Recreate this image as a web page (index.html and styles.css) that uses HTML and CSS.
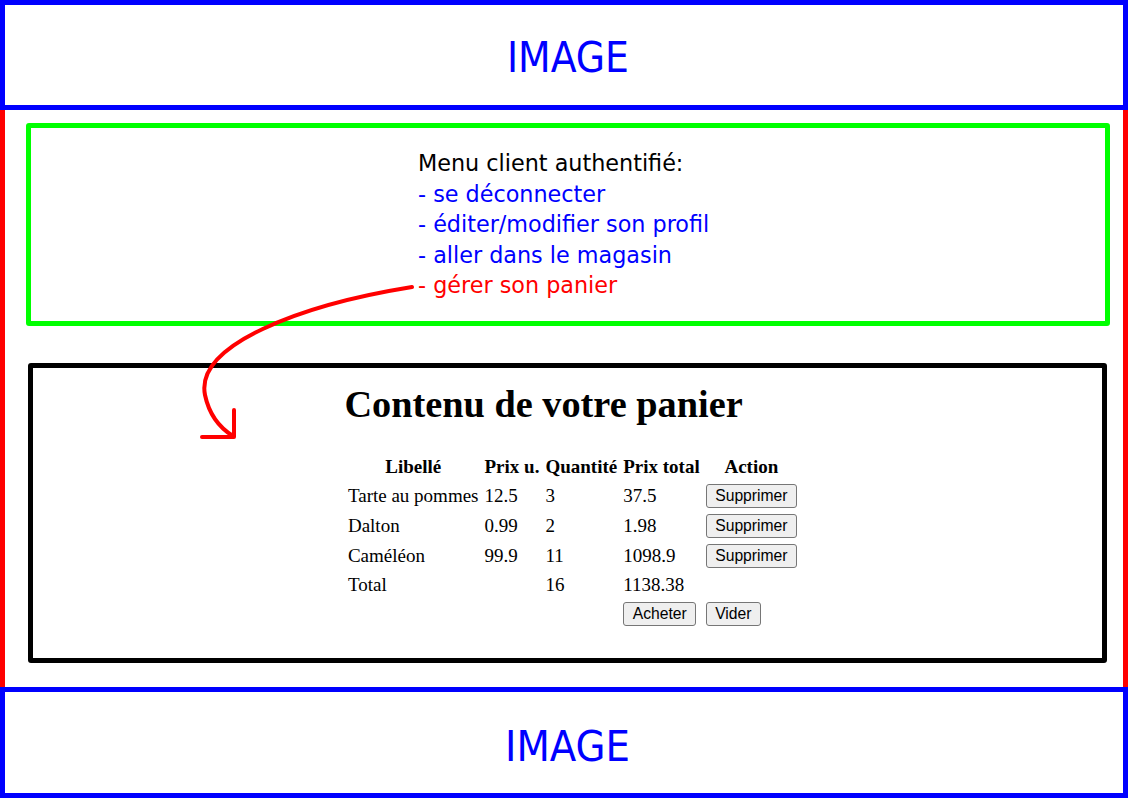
FILE: index.html
```html
<!DOCTYPE html>
<html lang="fr">
<head>
<meta charset="utf-8">
<title>Maquette panier</title>
<link rel="stylesheet" href="styles.css">
</head>
<body>
<header class="image-box image-top">IMAGE</header>
<main class="middle">
  <section class="menu-box">
    <div class="menu">
      <div class="menu-title">Menu client authentifié:</div>
      <div class="menu-item">- se déconnecter</div>
      <div class="menu-item">- éditer/modifier son profil</div>
      <div class="menu-item">- aller dans le magasin</div>
      <div class="menu-item menu-active">- gérer son panier</div>
    </div>
  </section>
  <section class="cart-box">
    <div class="cart">
      <h1 class="cart-title">Contenu de votre panier</h1>
      <table class="cart-table">
        <thead>
          <tr><th>Libellé</th><th>Prix u.</th><th>Quantité</th><th>Prix total</th><th>Action</th></tr>
        </thead>
        <tbody>
          <tr><td>Tarte au pommes</td><td>12.5</td><td>3</td><td>37.5</td><td><button class="btn">Supprimer</button></td></tr>
          <tr><td>Dalton</td><td>0.99</td><td>2</td><td>1.98</td><td><button class="btn">Supprimer</button></td></tr>
          <tr><td>Caméléon</td><td>99.9</td><td>11</td><td>1098.9</td><td><button class="btn">Supprimer</button></td></tr>
          <tr><td>Total</td><td></td><td>16</td><td>1138.38</td><td></td></tr>
          <tr><td></td><td></td><td></td><td><button class="btn">Acheter</button></td><td><button class="btn">Vider</button></td></tr>
        </tbody>
      </table>
    </div>
  </section>
</main>
<footer class="image-box image-bottom">IMAGE</footer>
<svg class="arrow" width="1128" height="798" viewBox="0 0 1128 798" aria-hidden="true">
  <path d="M412 287 C 300 305 195 345 205 395 C 209 414 220 428 233 436" fill="none" stroke="#ff0000" stroke-width="4" stroke-linecap="round"/>
  <path d="M234 410 L234 437 L202 437" fill="none" stroke="#ff0000" stroke-width="4" stroke-linecap="round" stroke-linejoin="round"/>
</svg>
</body>
</html>
```
FILE: styles.css
```css
html, body {
  margin: 0;
  padding: 0;
  background: #ffffff;
}

body {
  position: relative;
  width: 1128px;
  height: 798px;
  overflow: hidden;
  font-family: "DejaVu Sans", sans-serif;
}

.image-box {
  box-sizing: border-box;
  border: 5px solid #0000ff;
  color: #0000ff;
  font-family: "DejaVu Sans Condensed", "DejaVu Sans", sans-serif;
  font-stretch: condensed;
  font-size: 42px;
  display: flex;
  align-items: center;
  justify-content: center;
  padding: 4px 0 0 8px;
}

.image-top {
  height: 110px;
}

.image-bottom {
  height: 111px;
  padding: 6px 0 0 7px;
  font-size: 43px;
}

.middle {
  box-sizing: border-box;
  height: 577px;
  border-left: 5px solid #ff0000;
  border-right: 5px solid #ff0000;
  padding: 13px 13px 0 21px;
  display: flex;
  flex-direction: column;
}

.menu-box {
  box-sizing: border-box;
  height: 203px;
  border: 5px solid #00ff00;
  border-radius: 3px;
  padding: 20px 0 0 387px;
}

.menu {
  font-size: 22.3px;
  line-height: 30.5px;
}

.menu-title {
  color: #000000;
}

.menu-item {
  color: #0000ff;
}

.menu-item.menu-active {
  color: #ff0000;
}

.cart-box {
  box-sizing: border-box;
  height: 300px;
  margin: 37px 3px 0 2px;
  border: 5px solid #000000;
  border-radius: 3px;
  padding-top: 15px;
  display: flex;
  justify-content: center;
}

.cart {
  font-family: "Liberation Serif", serif;
  padding-left: 10px;
}

.cart-title {
  margin: 0 0 25.5px 1px;
  font-size: 38.3px;
  font-weight: bold;
  line-height: 43.7px;
}

.cart-table {
  border-collapse: separate;
  border-spacing: 3px;
  font-size: 19px;
}

.cart-table th,
.cart-table td {
  padding: 1.5px;
  line-height: 21.9px;
  text-align: left;
}

.cart-table th {
  text-align: center;
  font-weight: bold;
  line-height: 20.9px;
}

.btn {
  box-sizing: border-box;
  height: 24px;
  font-family: "Liberation Sans", Arial, sans-serif;
  font-size: 15.7px;
  color: #000000;
  background: #efefef;
  border: 1.2px solid #767676;
  border-radius: 3px;
  padding: 0 8.5px;
  line-height: 20px;
}

.arrow {
  position: absolute;
  left: 0;
  top: 0;
  pointer-events: none;
}
```
